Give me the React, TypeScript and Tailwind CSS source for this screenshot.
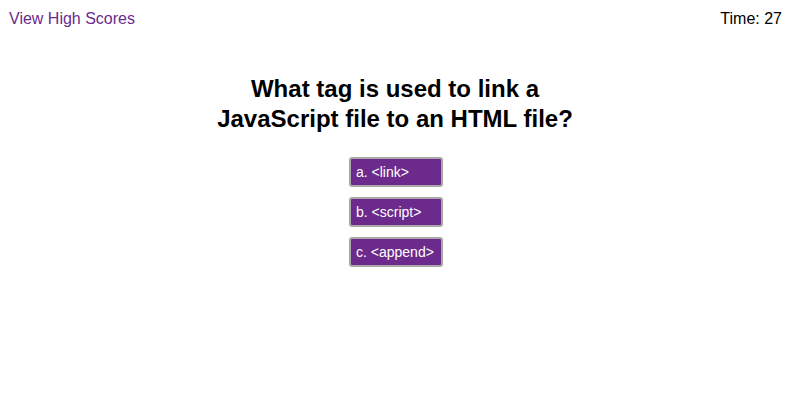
import React from "react";

const choices = ["a. <link>", "b. <script>", "c. <append>"];

export default function App() {
  return (
    <div className="min-h-[418px] bg-white font-['Liberation_Sans',Arial,sans-serif] text-black">
      <header className="flex items-center justify-between pl-[9px] pr-[8px] pt-[9px] text-base leading-[19px]">
        <a href="#" className="text-[#6b2a8c]">View High Scores</a>
        <span>Time: 27</span>
      </header>
      <main className="mt-[46px] flex flex-col items-center">
        <h1 className="w-[400px] text-center text-2xl font-bold leading-[30px]">
          What tag is used to link a JavaScript file to an HTML file?
        </h1>
        <div className="ml-[2px] mt-[23px] flex w-[94px] flex-col gap-[10px]">
          {choices.map((c) => (
            <button
              key={c}
              className="h-[30px] whitespace-nowrap rounded-[3px] border-2 border-[#a9a9a9] bg-[#6b2a8c] pl-[5px] text-left text-[14px] text-white"
            >
              {c}
            </button>
          ))}
        </div>
      </main>
    </div>
  );
}
